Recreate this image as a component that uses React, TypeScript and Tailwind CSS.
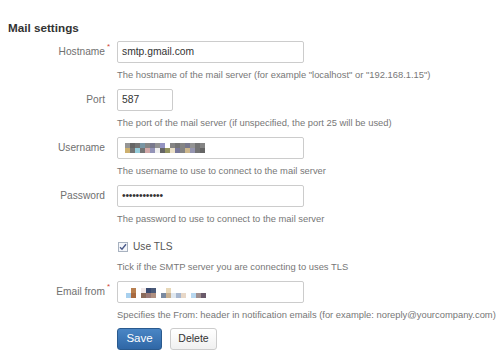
import React from "react";

const userTop = ["#8a8a8a", "#555", "#666", "#6a8a9a", "#7a7a7a", "#6a6a80", "#888", "#8888bb", "#fff", "#777", "#666", "#777", "#6a6a80", "#888", "#666", "#777"];
const userBottom = ["#c8a860", "#666", "#8ac8d8", "#666", "#cfa0a0", "#8888b0", "#eee", "#555", "#8a8a50", "#e8dcc0", "#6a6a90", "#777", "#c8b080", "#8a8aa8", "#666", "#555"];

const mailTop = ["", "#b88050", "", "#f0e8e8", "#3a4a70", "#4a5a78", "", "", "#e8d8b8", "", "", "", "", "", "", ""];
const mailBottom = ["#a8d0ee", "#a86a40", "", "#8a6a5a", "#9a7a78", "#b09080", "", "#7a8aa0", "#c8b090", "#e0e8f0", "#a8b8d0", "#e8d8c8", "", "#b8d8f0", "#a09090", "#6a5a6a"];

function Pixels({ top, bottom }: { top: string[]; bottom: string[] }) {
    return (
        <div className="flex">
            {top.map((c, i) => (
                <div key={i} className="flex flex-col">
                    <div className="w-[5px] h-[5px]" style={{ background: c || "transparent" }} />
                    <div className="w-[5px] h-[5px]" style={{ background: bottom[i] || "transparent" }} />
                </div>
            ))}
        </div>
    );
}

function Row({ label, required, help, tight, children }: { label?: string; required?: boolean; help: string; tight?: boolean; children: React.ReactNode }) {
    return (
        <div className="flex">
            <div className="w-[105px] shrink-0 h-[22px] flex items-center justify-end">
                {label && (
                    <span className="relative text-[10.2px] text-[#707070]">
                        {label}
                        {required && <span className="absolute -right-[5px] -top-[3px] text-[8px] text-[#d04437]">*</span>}
                    </span>
                )}
            </div>
            <div className="ml-[12px] flex flex-col">
                {children}
                <div className={(tight ? "mt-[2px]" : "mt-[5px]") + " mb-[7px] h-[14px] leading-[14px] text-[9.4px] text-[#777] whitespace-nowrap"}>{help}</div>
            </div>
        </div>
    );
}

const inputCls = "h-[22px] border border-[#cccccc] rounded-[2px] bg-white flex items-center px-[4px] text-[10.3px] text-[#333]";

export default function App() {
    return (
        <div className="w-[500px] h-[361px] bg-white overflow-hidden pl-[8px] pt-[21px]" style={{ fontFamily: '"Liberation Sans", Arial, sans-serif' }}>
            <h2 className="text-[11.7px] font-bold text-[#333] leading-[14px] mb-[6px]">Mail settings</h2>
            <div className="-ml-[8px]">
                <Row label="Hostname" required help={'The hostname of the mail server (for example "localhost" or "192.168.1.15")'}>
                    <div className={inputCls + " w-[187px]"}>smtp.gmail.com</div>
                </Row>
                <Row label="Port" help="The port of the mail server (if unspecified, the port 25 will be used)">
                    <div className={inputCls + " w-[56px]"}>587</div>
                </Row>
                <Row label="Username" help="The username to use to connect to the mail server">
                    <div className={inputCls + " w-[187px] pl-[7px]"}>
                        <div className="opacity-90">
                            <Pixels top={userTop} bottom={userBottom} />
                        </div>
                    </div>
                </Row>
                <Row label="Password" help="The password to use to connect to the mail server">
                    <div className={inputCls + " w-[187px] text-[9px] tracking-[-0.2px]"}>••••••••••••</div>
                </Row>
                <Row tight help="Tick if the SMTP server you are connecting to uses TLS">
                    <div className="h-[22px] flex items-center mt-[3px]">
                        <span className="w-[10px] h-[10px] border border-[#a8b2c0] bg-[#f4f6fa] flex items-center justify-center ml-[1px]">
                            <svg width="8" height="8" viewBox="0 0 8 8">
                                <path d="M1 4.2 L3 6.2 L7 1.2" fill="none" stroke="#4a5a8a" strokeWidth="1.4" />
                            </svg>
                        </span>
                        <span className="ml-[5px] text-[10.2px] text-[#555]">Use TLS</span>
                    </div>
                </Row>
                <Row label="Email from" required help="Specifies the From: header in notification emails (for example: noreply@yourcompany.com)">
                    <div className={inputCls + " w-[187px] pl-[8px]"}>
                        <div className="mt-[2px]">
                            <Pixels top={mailTop} bottom={mailBottom} />
                        </div>
                    </div>
                </Row>
                <div className="flex gap-[8px] ml-[117px] -mt-[1px]">
                    <button className="w-[45px] h-[22px] rounded-[3px] border border-[#2a5a8e] bg-gradient-to-b from-[#4a86c5] to-[#2f67a6] text-white text-[11.5px]">Save</button>
                    <button className="w-[47px] h-[22px] rounded-[3px] border border-[#cccccc] bg-gradient-to-b from-white to-[#f0f0f0] text-[#333] text-[10.5px]">Delete</button>
                </div>
            </div>
        </div>
    );
}
